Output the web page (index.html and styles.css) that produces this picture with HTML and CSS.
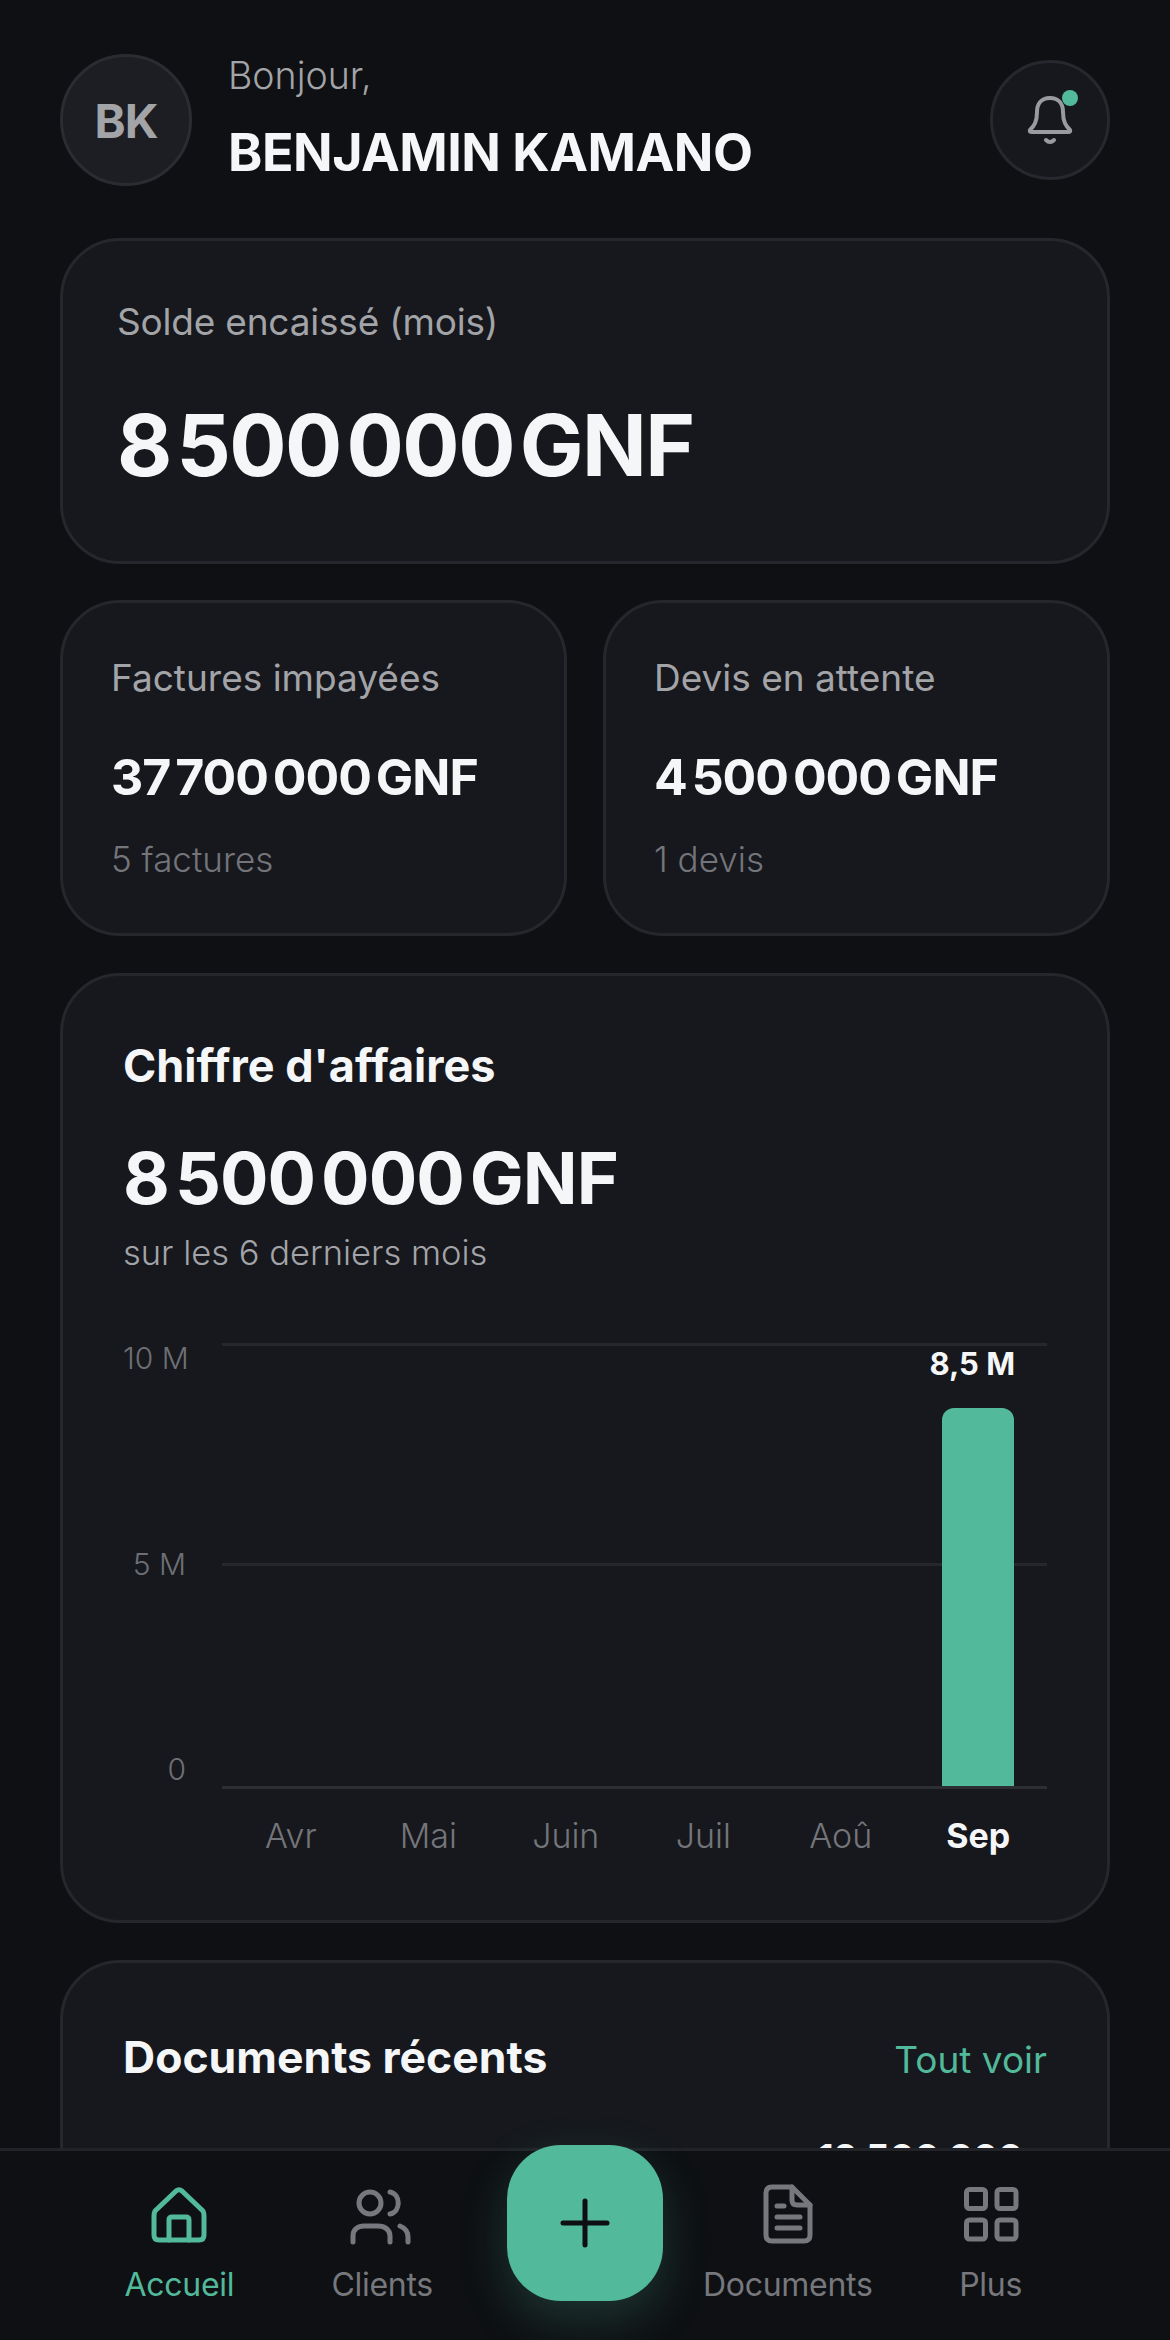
FILE: index.html
```html
<!DOCTYPE html>
<html lang="fr">
    <head>
        <title>Tableau de bord</title>
        <meta charset="UTF-8">
        <meta name="viewport" content="width=device-width, initial-scale=1.0">
        <link rel="stylesheet" href="styles.css">
    </head>
    <body>
        <main class="page">
            <header class="top">
                <div class="avatar">BK</div>
                <div class="hello">
                    <div class="hello-small">Bonjour,</div>
                    <div class="hello-name">BENJAMIN KAMANO</div>
                </div>
                <button class="bell">
                    <svg width="66" height="66" viewBox="0 0 66 66" fill="none" stroke="#9a9b9f" stroke-width="4" stroke-linecap="round" stroke-linejoin="round">
                        <path d="M33 11C24 11 20 17 20 25C20 35 17 39 13 43Q12 45 15 45H51Q54 45 53 43C49 39 46 35 46 25C46 17 42 11 33 11Z"/>
                        <path d="M29 53Q33 57 37 53"/>
                    </svg>
                    <span class="bell-dot"></span>
                </button>
            </header>

            <section class="card solde">
                <div class="solde-label">Solde encaissé (mois)</div>
                <div class="solde-value">8 500 000 GNF</div>
            </section>

            <div class="two-cols">
                <section class="card stat">
                    <div class="stat-label">Factures impayées</div>
                    <div class="stat-value">37 700 000 GNF</div>
                    <div class="stat-note">5 factures</div>
                </section>
                <section class="card stat">
                    <div class="stat-label">Devis en attente</div>
                    <div class="stat-value">4 500 000 GNF</div>
                    <div class="stat-note">1 devis</div>
                </section>
            </div>

            <section class="card revenue">
                <h2 class="revenue-title">Chiffre d'affaires</h2>
                <div class="revenue-value">8 500 000 GNF</div>
                <div class="revenue-sub">sur les 6 derniers mois</div>
                <div class="chart">
                    <div class="y-axis">
                        <span>10 M</span>
                        <span>5 M</span>
                        <span>0</span>
                    </div>
                    <div class="plot">
                        <div class="col"></div>
                        <div class="col"></div>
                        <div class="col"></div>
                        <div class="col"></div>
                        <div class="col"></div>
                        <div class="col">
                            <span class="bar-value">8,5 M</span>
                            <div class="bar"></div>
                        </div>
                    </div>
                    <div class="months">
                        <span>Avr</span>
                        <span>Mai</span>
                        <span>Juin</span>
                        <span>Juil</span>
                        <span>Aoû</span>
                        <span class="current">Sep</span>
                    </div>
                </div>
            </section>

            <section class="card recent">
                <div class="recent-head">
                    <h2 class="recent-title">Documents récents</h2>
                    <a class="recent-link" href="#">Tout voir</a>
                </div>
                <div class="recent-row">12 500 000</div>
            </section>
        </main>

        <nav class="tabbar">
            <a class="tab active" href="#">
                <svg width="72" height="72" viewBox="0 0 72 72" fill="none" stroke="currentColor" stroke-width="5" stroke-linecap="round" stroke-linejoin="round">
                    <path d="M12 33L33 13Q36 10.5 39 13L60 33Q61 35 61 38V57Q61 62 56 62H16Q11 62 11 57V38Q11 35 12 33Z"/>
                    <path d="M26 62V42Q26 39 29 39H43Q46 39 46 42V62"/>
                </svg>
                <span>Accueil</span>
            </a>
            <a class="tab" href="#">
                <svg class="icon-clients" width="72" height="72" viewBox="0 0 72 72" fill="none" stroke="currentColor" stroke-width="5" stroke-linecap="round" stroke-linejoin="round">
                    <circle cx="28" cy="25" r="11"/>
                    <path d="M48 14C59 16 59 34 48 36"/>
                    <path d="M11 64V58C11 51 16 48 22 48H36C43 48 48 52 48 58V64"/>
                    <path d="M58 48C63 50 66 54 66 59V64"/>
                </svg>
                <span>Clients</span>
            </a>
            <div class="tab-fab">
                <button class="fab">
                    <svg width="54" height="54" viewBox="0 0 54 54" fill="none" stroke="#0d0f12" stroke-width="5" stroke-linecap="round">
                        <path d="M27 5V49"/>
                        <path d="M5 27H49"/>
                    </svg>
                </button>
            </div>
            <a class="tab" href="#">
                <svg width="72" height="72" viewBox="0 0 72 72" fill="none" stroke="currentColor" stroke-width="5" stroke-linecap="round" stroke-linejoin="round">
                    <path d="M20 9H40L58 27V57Q58 63 52 63H20Q14 63 14 57V15Q14 9 20 9Z"/>
                    <path d="M40 9V22Q40 27 45 27H58"/>
                    <path d="M25 28H32"/>
                    <path d="M25 39H48"/>
                    <path d="M25 50H48"/>
                </svg>
                <span>Documents</span>
            </a>
            <a class="tab" href="#">
                <svg width="72" height="72" viewBox="0 0 72 72" fill="none" stroke="currentColor" stroke-width="5" stroke-linejoin="round">
                    <rect x="11.5" y="11.5" width="19" height="19" rx="3"/>
                    <rect x="42" y="11.5" width="19" height="19" rx="3"/>
                    <rect x="11.5" y="42" width="19" height="19" rx="3"/>
                    <rect x="42" y="42" width="19" height="19" rx="3"/>
                </svg>
                <span>Plus</span>
            </a>
        </nav>
    </body>
</html>
```

FILE: styles.css
```css
* {
    box-sizing: border-box;
}

html, body {
    margin: 0;
    height: 2340px;
    overflow: hidden;
}

body {
    position: relative;
    background: #0e1013;
    color: #f5f6f7;
    font-family: "Inter", "Liberation Sans", sans-serif;
}

.page {
    padding: 54px 60px 0;
}

/* Header */
.top {
    display: flex;
    align-items: center;
    height: 132px;
}

.avatar {
    width: 132px;
    height: 132px;
    flex: none;
    display: flex;
    align-items: center;
    justify-content: center;
    border-radius: 50%;
    background: #1c1e23;
    border: 3px solid #2a2c31;
    color: #a3a4a8;
    font-size: 47px;
    font-weight: 700;
    letter-spacing: -1px;
}

.hello {
    flex: 1;
    margin-left: 36px;
    padding-bottom: 5px;
}

.hello-small {
    font-size: 37.5px;
    line-height: 44px;
    font-weight: 300;
    color: #a3a4a8;
}

.hello-name {
    margin-top: 26px;
    font-size: 52px;
    line-height: 58px;
    font-weight: 700;
    letter-spacing: -0.5px;
}

.bell {
    position: relative;
    width: 120px;
    height: 120px;
    flex: none;
    display: flex;
    align-items: center;
    justify-content: center;
    padding: 0;
    border-radius: 50%;
    background: #16181d;
    border: 3px solid #26282d;
}

.bell-dot {
    position: absolute;
    top: 27px;
    right: 29px;
    width: 16px;
    height: 16px;
    border-radius: 50%;
    background: #52b99a;
}

/* Cards */
.card {
    background: #16181d;
    border: 3px solid #25272c;
    border-radius: 60px;
}

.solde {
    height: 326px;
    margin-top: 52px;
    padding: 57px 54px 0;
}

.solde-label {
    font-size: 37px;
    line-height: 48px;
    letter-spacing: -0.2px;
    color: #a3a4a8;
}

.solde-value {
    margin-top: 50px;
    font-size: 85px;
    line-height: 100px;
    font-weight: 700;
    letter-spacing: -1.5px;
    word-spacing: -13px;
}

.two-cols {
    display: grid;
    grid-template-columns: 1fr 1fr;
    gap: 36px;
    margin-top: 36px;
}

.stat {
    height: 336px;
    padding: 51px 48px 0;
}

.stat-label {
    font-size: 37px;
    line-height: 48px;
    color: #a3a4a8;
}

.stat-value {
    margin-top: 47px;
    font-size: 50px;
    line-height: 56px;
    font-weight: 700;
    letter-spacing: -1px;
    word-spacing: -6px;
}

.stat-note {
    margin-top: 32px;
    font-size: 35px;
    line-height: 44px;
    font-weight: 300;
    color: #74757a;
}

/* Chiffre d'affaires */
.revenue {
    height: 950px;
    margin-top: 37px;
    padding: 63px 60px 0;
}

.revenue-title {
    margin: 0;
    font-size: 45px;
    line-height: 54px;
    font-weight: 700;
}

.revenue-value {
    margin-top: 42px;
    font-size: 72px;
    line-height: 86px;
    font-weight: 700;
    letter-spacing: -1px;
    word-spacing: -10px;
}

.revenue-sub {
    margin-top: 10px;
    font-size: 34.5px;
    line-height: 44px;
    font-weight: 300;
    color: #a3a4a8;
}

.chart {
    display: grid;
    grid-template-columns: 99px 1fr;
    grid-template-rows: 446px auto;
    margin-top: 68px;
}

.y-axis {
    display: flex;
    flex-direction: column;
    justify-content: space-between;
    padding: 0 36px 5px 0;
    text-align: right;
    white-space: nowrap;
    font-size: 30px;
    line-height: 30px;
    font-weight: 300;
    color: #6e6f74;
}

.plot {
    display: grid;
    grid-template-columns: repeat(6, 1fr);
    align-items: end;
    border-bottom: 3px solid #2c2e33;
    background:
        linear-gradient(#25272c, #25272c) 0 0 / 100% 3px no-repeat,
        linear-gradient(#25272c, #25272c) 0 50% / 100% 3px no-repeat;
}

.col {
    display: flex;
    flex-direction: column;
    align-items: center;
}

.bar-value {
    margin: 0 12px 24px 0;
    font-size: 31px;
    line-height: 40px;
    font-weight: 700;
}

.bar {
    width: 72px;
    height: 378px;
    background: #52b99a;
    border-radius: 12px 12px 0 0;
}

.months {
    grid-column: 2;
    display: grid;
    grid-template-columns: repeat(6, 1fr);
    margin-top: 25px;
    text-align: center;
    font-size: 34px;
    line-height: 44px;
    font-weight: 300;
    color: #74757a;
}

.months .current {
    font-weight: 700;
    color: #f5f6f7;
}

/* Documents recents */
.recent {
    height: 381px;
    margin-top: 37px;
    padding: 63px 60px 0;
}

.recent-head {
    display: flex;
    align-items: center;
    justify-content: space-between;
}

.recent-title {
    margin: 0;
    font-size: 44.5px;
    line-height: 56px;
    font-weight: 700;
}

.recent-link {
    margin-top: 6px;
    font-size: 37px;
    line-height: 56px;
    color: #52b99a;
    text-decoration: none;
}

.recent-row {
    margin-top: 48px;
    padding-right: 24px;
    text-align: right;
    font-size: 37px;
    line-height: 44px;
    font-weight: 700;
}

/* Bottom bar */
.tabbar {
    position: absolute;
    left: 0;
    right: 0;
    bottom: 0;
    height: 192px;
    display: grid;
    grid-template-columns: repeat(5, 1fr);
    padding: 0 78px;
    background: #0e1013;
    border-top: 3px solid #212328;
}

.tab {
    display: flex;
    flex-direction: column;
    align-items: center;
    padding-top: 27px;
    color: #77787d;
    font-size: 32px;
    line-height: 44px;
    text-decoration: none;
    white-space: nowrap;
}

.tab span {
    margin-top: 13px;
    letter-spacing: -0.3px;
}

.tab.active {
    color: #52b99a;
}

.icon-clients {
    margin-left: -8px;
}

.tab-fab {
    display: flex;
    justify-content: center;
}

.fab {
    width: 156px;
    height: 156px;
    flex: none;
    display: flex;
    align-items: center;
    justify-content: center;
    margin-top: -6px;
    padding: 0;
    border: 0;
    border-radius: 54px;
    background: #52b99a;
    box-shadow: 0 18px 48px rgba(82, 185, 154, 0.22);
}
```
